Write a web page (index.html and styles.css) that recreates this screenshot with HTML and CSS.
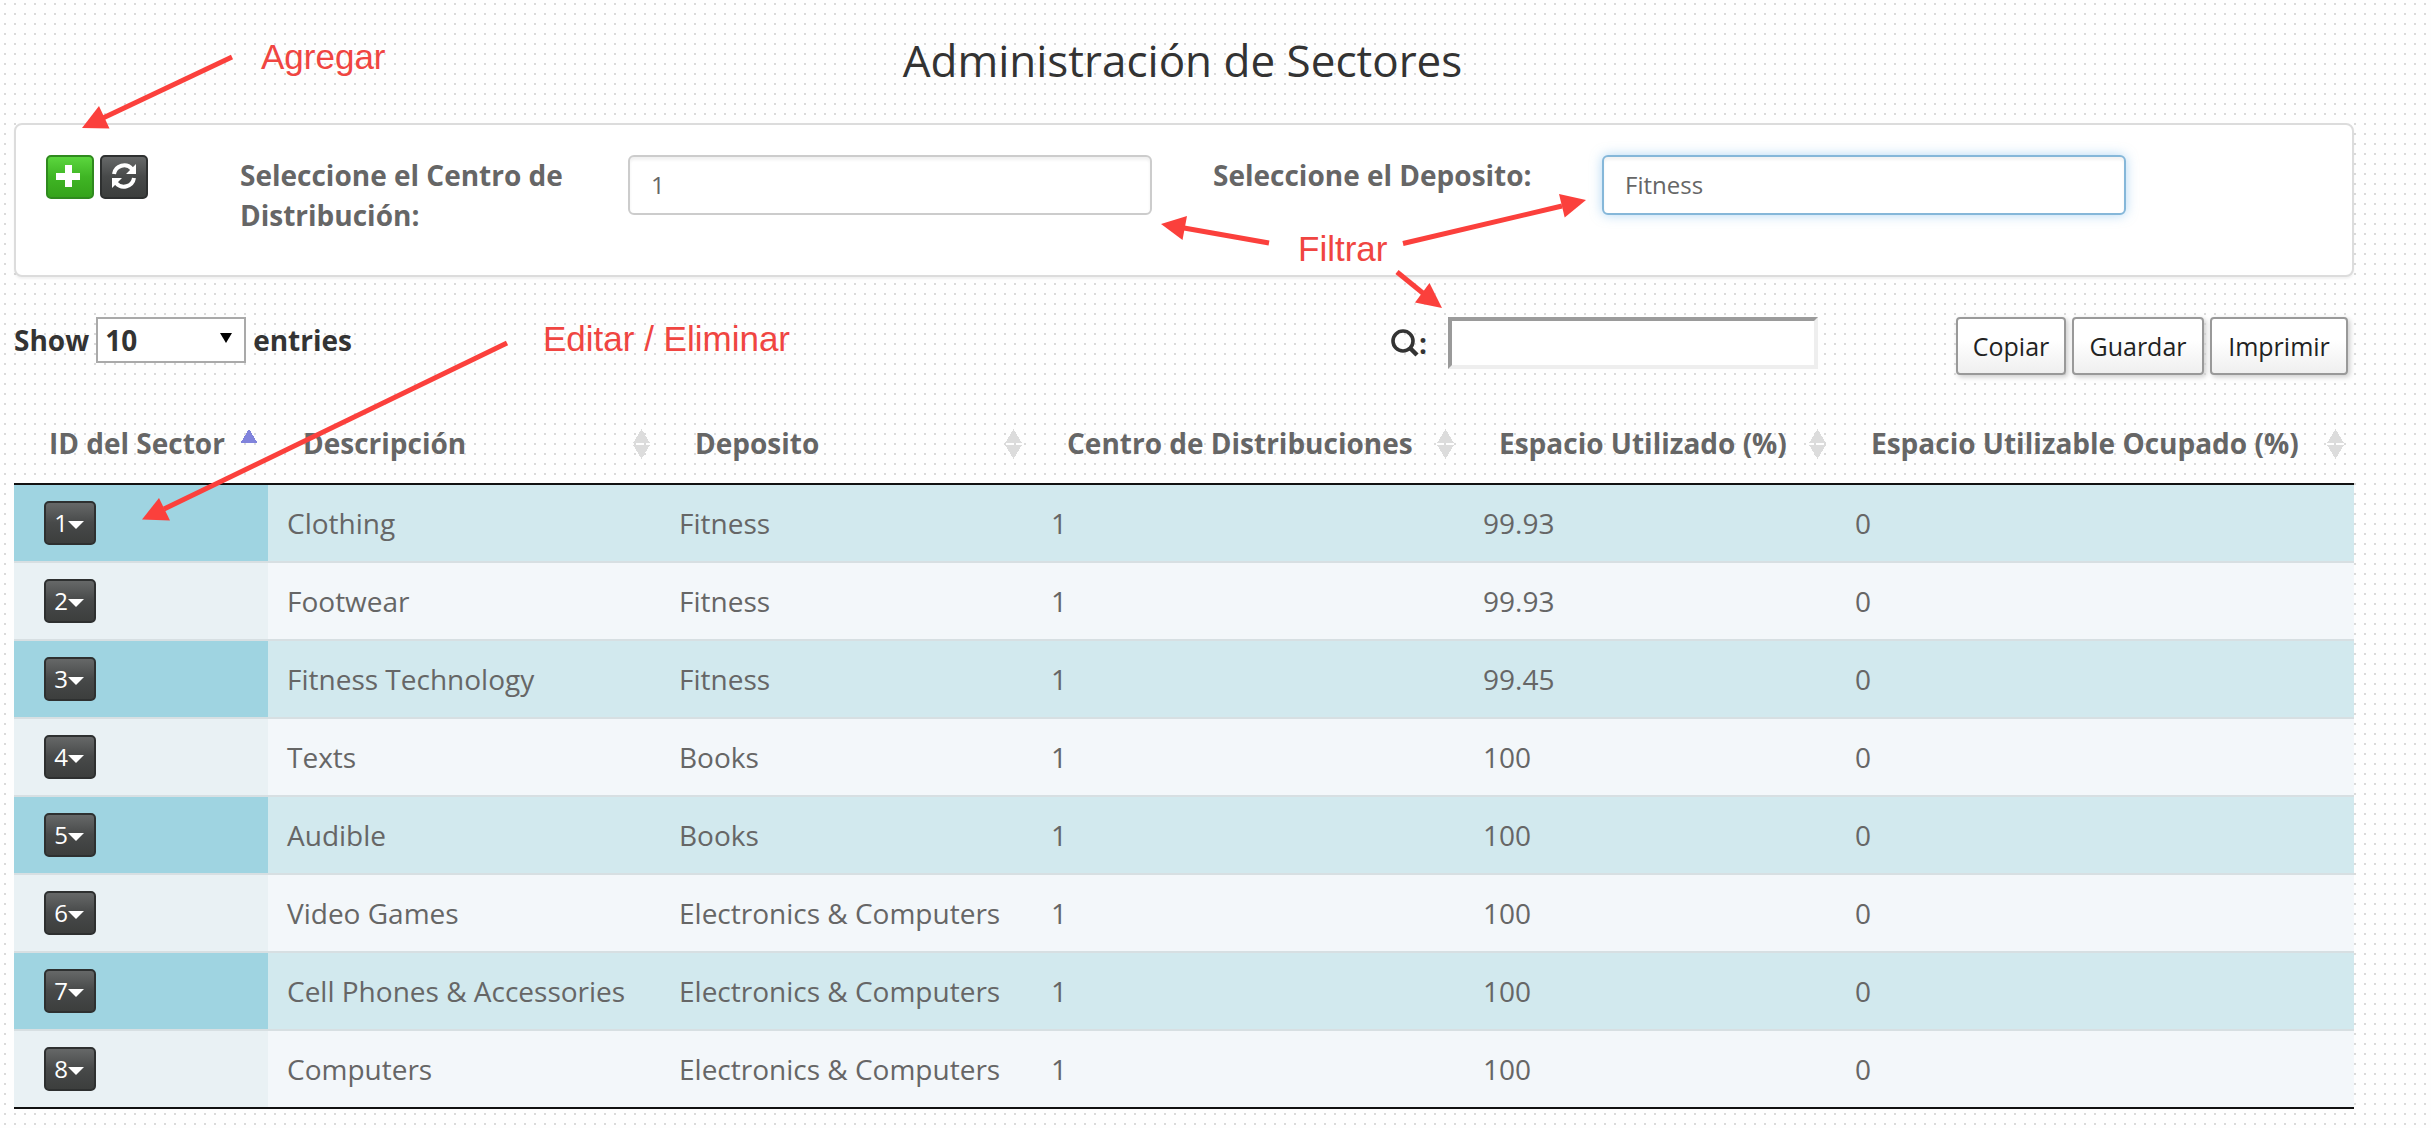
FILE: index.html
```html
<!DOCTYPE html>
<html lang="es">
<head>
<meta charset="utf-8">
<title>Administración de Sectores</title>
<link rel="stylesheet" href="styles.css">
</head>
<body>
<main class="page">
  <h1 class="title">Administración de Sectores</h1>

  <section class="panel">
    <div class="actions">
      <button class="btn btn-add" aria-label="Agregar"><svg width="24" height="22" viewBox="0 0 24 22"><path d="M9 0h7v8h8v7h-8v7h-7v-7h-9v-7h9z" fill="#fff"/></svg></button>
      <button class="btn" aria-label="Recargar"><svg width="26" height="26" viewBox="0 0 26 26"><path d="M3 11A10.300 10.300 0 0 1 21 6M23 15A10.300 10.300 0 0 1 5 20" fill="none" stroke="#fff" stroke-width="4"/><path d="M25 1v10h-10zM1 25v-10h10z" fill="#fff"/></svg></button>
    </div>
    <label class="field-label">Seleccione el Centro de Distribución:</label>
    <div class="field">1</div>
    <label class="field-label">Seleccione el Deposito:</label>
    <div class="field focused">Fitness</div>
  </section>

  <div class="toolbar">
    <div class="length">Show <span class="select">10<svg width="12" height="10" viewBox="0 0 12 10"><path d="M0 0h12L6 10z" fill="#000"/></svg></span> entries</div>
    <div class="search">
      <svg width="28" height="28" viewBox="0 0 28 28"><circle cx="12" cy="12" r="10" fill="none" stroke="#333" stroke-width="3.600"/><path d="M19 19l7 7" stroke="#333" stroke-width="4.500"/></svg><span>:</span>
      <input class="search-input" type="text" aria-label="Buscar">
    </div>
    <div class="exports"><button class="export copy">Copiar</button><button class="export save">Guardar</button><button class="export print">Imprimir</button></div>
  </div>

  <table class="sectors">
    <colgroup><col class="c1"><col class="c2"><col class="c3"><col class="c4"><col class="c5"><col class="c6"></colgroup>
    <thead>
      <tr>
        <th class="asc">ID del Sector</th><th>Descripción</th><th>Deposito</th><th>Centro de Distribuciones</th><th>Espacio Utilizado (%)</th><th>Espacio Utilizable Ocupado (%)</th>
      </tr>
    </thead>
    <tbody>
      <tr><td><button class="btn id">1<i></i></button></td><td>Clothing</td><td>Fitness</td><td>1</td><td>99.93</td><td>0</td></tr>
      <tr><td><button class="btn id">2<i></i></button></td><td>Footwear</td><td>Fitness</td><td>1</td><td>99.93</td><td>0</td></tr>
      <tr><td><button class="btn id">3<i></i></button></td><td>Fitness Technology</td><td>Fitness</td><td>1</td><td>99.45</td><td>0</td></tr>
      <tr><td><button class="btn id">4<i></i></button></td><td>Texts</td><td>Books</td><td>1</td><td>100</td><td>0</td></tr>
      <tr><td><button class="btn id">5<i></i></button></td><td>Audible</td><td>Books</td><td>1</td><td>100</td><td>0</td></tr>
      <tr><td><button class="btn id">6<i></i></button></td><td>Video Games</td><td>Electronics &amp; Computers</td><td>1</td><td>100</td><td>0</td></tr>
      <tr><td><button class="btn id">7<i></i></button></td><td>Cell Phones &amp; Accessories</td><td>Electronics &amp; Computers</td><td>1</td><td>100</td><td>0</td></tr>
      <tr><td><button class="btn id">8<i></i></button></td><td>Computers</td><td>Electronics &amp; Computers</td><td>1</td><td>100</td><td>0</td></tr>
    </tbody>
  </table>
</main>

<svg class="notes" width="2431" height="1128" viewBox="0 0 2431 1128">
  <g class="shafts">
    <path d="M232 57L103 118"/>
    <path d="M507 343L164 509"/>
    <path d="M1269 243L1184 228"/>
    <path d="M1403 243.500L1562 206"/>
    <path d="M1397 272L1424 294"/>
  </g>
  <g class="heads">
    <path d="M82 128L99 106L109.500 128.500z"/>
    <path d="M142 519.500L159 498L170 520.500z"/>
    <path d="M1161 224L1187 216L1182.500 240z"/>
    <path d="M1586 200L1559 194L1564.700 217.500z"/>
    <path d="M1442 308L1429.500 283L1415 302.500z"/>
  </g>
  <text x="261" y="69">Agregar</text>
  <text x="1298" y="261">Filtrar</text>
  <text x="543" y="351">Editar / Eliminar</text>
</svg>
</body>
</html>
```

FILE: styles.css
```css
* { box-sizing: border-box; }

html { overflow: hidden; }

body {
  margin: 0;
  height: 1128px;
  overflow: hidden;
  position: relative;
  font: 28px/40px "Open Sans", sans-serif;
  color: #666;
  background: conic-gradient(from 270deg at 2px 2px, #dadada 90deg, transparent 0) 4px 3px / 10px 10px #fefefe;
}

.page {
  width: 2340px;
  margin-left: 14px;
}

.title {
  margin: 0;
  height: 123px;
  padding: 30px 3px 0 0;
  text-align: center;
  font-size: 44px;
  line-height: 60px;
  font-weight: 400;
  color: #333;
}

.panel {
  display: grid;
  grid-template-columns: 194px 388px 585px 389px 524px;
  align-items: start;
  height: 154px;
  padding: 30px 0 0 30px;
  background: #fff;
  border: 2px solid #dcdcdc;
  border-radius: 8px;
  box-shadow: 0 2px 2px rgba(0, 0, 0, .05);
}

.actions { display: flex; gap: 6px; }

.btn {
  display: flex;
  align-items: center;
  justify-content: center;
  width: 48px;
  height: 44px;
  padding: 0;
  border: 2px solid #2e3030;
  border-radius: 5px;
  color: #fff;
  background: linear-gradient(#666868, #474949 50%, #3c3e3d);
}

.btn-add {
  padding-right: 4px;
  border-color: #2f8a1e;
  background: linear-gradient(#5bd63e, #3fb524 50%, #35a31b);
}

.btn svg { margin-bottom: 3px; }

.field-label {
  font-weight: 700;
  max-width: 340px;
}

.field {
  width: 524px;
  height: 60px;
  padding: 0 21px;
  border: 2px solid #ccc;
  border-radius: 6px;
  background: #fff;
  box-shadow: inset 0 3px 3px rgba(0, 0, 0, .06);
  font-size: 24px;
  line-height: 55px;
}

.field.focused {
  border-color: #85b7d9;
  box-shadow: inset 0 3px 3px rgba(0, 0, 0, .05), 0 0 12px rgba(102, 175, 233, .5);
}

.toolbar {
  display: grid;
  grid-template-columns: 1377px 565px 1fr;
  align-items: start;
  height: 94px;
  margin-top: 40px;
  font-weight: 700;
  color: #333;
}

.length {
  display: flex;
  align-items: center;
  gap: 7px;
  height: 46px;
}

.select {
  display: flex;
  align-items: center;
  justify-content: space-between;
  width: 150px;
  height: 46px;
  padding: 0 12px 0 7px;
  border: 2px solid #a9a9a9;
  background: #fff;
}

.select svg { margin-bottom: 4px; }

.search { display: flex; align-items: center; height: 52px; }

.search span { width: 29px; }

.search-input {
  width: 370px;
  height: 52px;
  border: 4px solid;
  border-color: #9a9a9a #eee #eee #9a9a9a;
  background: #fff;
}

.exports { display: flex; gap: 6px; }

.export {
  height: 58px;
  padding: 0;
  border: 2px solid #999;
  border-radius: 4px;
  background: linear-gradient(#fff 40%, #efefef);
  box-shadow: 2px 2px 5px #ccc;
  font: 25px/50px "Open Sans", sans-serif;
  color: #222;
}

.copy { width: 110px; }
.save { width: 132px; }
.print { width: 138px; }

.sectors {
  width: 2340px;
  table-layout: fixed;
  border-collapse: separate;
  border-spacing: 0;
}

.c1 { width: 254px; }
.c2 { width: 392px; }
.c3 { width: 372px; }
.c4 { width: 432px; }
.c5 { width: 372px; }
.c6 { width: 518px; }

th {
  height: 74px;
  padding: 0 0 9px 35px;
  border-bottom: 2px solid #111;
  text-align: left;
  white-space: nowrap;
  background:
    conic-gradient(from 149deg at 50% 0, #dcdcdc 62deg, transparent 0) right 10px top 18px / 17px 14px no-repeat,
    conic-gradient(from -31deg at 50% 100%, #dcdcdc 62deg, transparent 0) right 10px top 34px / 17px 14px no-repeat;
}

th.asc {
  background: conic-gradient(from 149deg at 50% 0, #8083dc 62deg, transparent 0) right 11px top 18px / 16px 14px no-repeat;
}

td {
  height: 78px;
  padding: 0 0 0 19px;
  border-bottom: 2px solid #d7dfe2;
  background: #f3f7fa;
}

td:first-child { padding-left: 30px; background: #e9f1f4; }
tr:nth-child(odd) td { background: #d2e9ee; }
tr:nth-child(odd) td:first-child { background: #9fd4e1; }
tbody tr:last-child td { border-bottom-color: #111; }

.id {
  width: 52px;
  padding-right: 2px;
  font: 24px/40px "Open Sans", sans-serif;
}

.id i {
  border: 8px solid transparent;
  border-top-color: #fff;
  border-bottom: 0;
  margin-top: 4px;
}

.notes {
  position: absolute;
  left: 0;
  top: 0;
  pointer-events: none;
}

.shafts { stroke: #fb403c; stroke-width: 5; fill: none; }
.heads { fill: #fb403c; }
.notes text { font: 35px "Liberation Sans", sans-serif; fill: #f04541; }
```
